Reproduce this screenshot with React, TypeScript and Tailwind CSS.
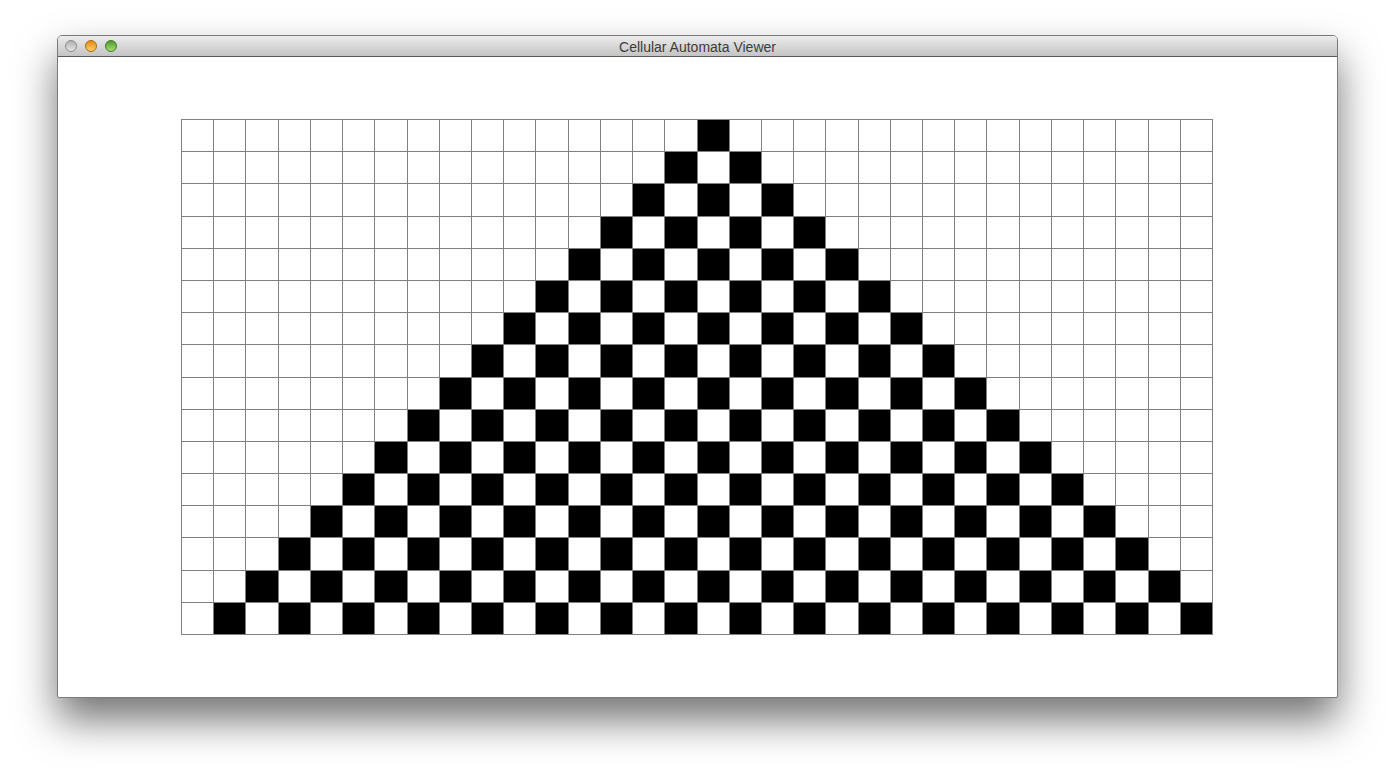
import React from "react";

const ROWS = 16;
const COLS = 32;

function isBlack(r: number, c: number) {
  const d = Math.abs(c - 16);
  return d <= r && (r - d) % 2 === 0;
}

export default function App() {
  const cells: React.ReactNode[] = [];
  for (let r = 0; r < ROWS; r++) {
    for (let c = 0; c < COLS; c++) {
      cells.push(
        <div key={`${r}-${c}`} className={isBlack(r, c) ? "bg-black" : "bg-white"} />
      );
    }
  }
  return (
    <div className="w-[1394px] h-[776px] bg-white pt-[35px] pl-[57px] overflow-hidden">
      <div className="w-[1281px] h-[663px] flex flex-col rounded-t-[5px] rounded-b-[2px] border border-[#7a7a7a] bg-white shadow-[0_22px_40px_rgba(0,0,0,0.55)] overflow-hidden">
        <div className="relative h-[21px] shrink-0 flex items-center justify-center pt-[2px] bg-gradient-to-b from-[#ececec] to-[#c4c4c4] border-b border-[#5a5a5a]">
          <div className="absolute left-[7px] top-[4px] flex gap-[8px]">
            <div className="w-[12px] h-[12px] rounded-full bg-gradient-to-b from-[#b0b0b0] to-[#e6e6e6] border border-[#8a8a8a]" />
            <div className="w-[12px] h-[12px] rounded-full bg-gradient-to-b from-[#e08a10] to-[#ffd060] border border-[#a86a10]" />
            <div className="w-[12px] h-[12px] rounded-full bg-gradient-to-b from-[#4c9a2a] to-[#a8e070] border border-[#3e7a22]" />
          </div>
          <span className="text-[14px] text-[#3c3c3c] leading-none" style={{ fontFamily: '"Liberation Sans", Arial, sans-serif' }}>
            Cellular Automata Viewer
          </span>
        </div>
        <div className="flex-1 pt-[62px] pl-[123px]">
          <div className="w-[1032px] h-[516px] grid grid-cols-[repeat(32,1fr)] grid-rows-[repeat(16,1fr)] gap-px p-px bg-[#808080]">
            {cells}
          </div>
        </div>
      </div>
    </div>
  );
}
